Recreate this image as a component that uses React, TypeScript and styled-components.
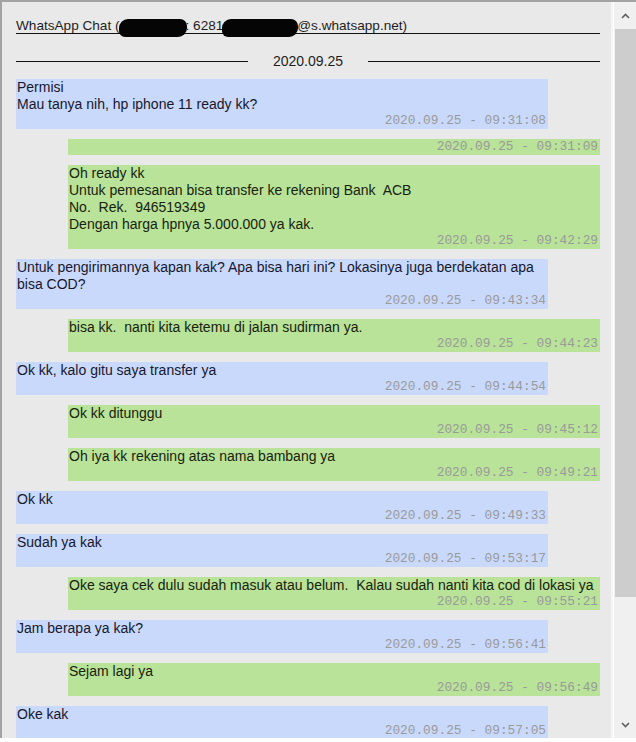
import styled, { createGlobalStyle } from "styled-components";

const GlobalStyle = createGlobalStyle`
  html, body {
    margin: 0;
    padding: 0;
    background: #ffffff;
  }
`

const Window = styled.div`
  display: flex;
  width: 634px;
  height: 736px;
  border-top: 2px solid #a3a3a3;
  border-left: 2px solid #a3a3a3;
  background: #e9e9e9;
  overflow: hidden;
`

const ChatPane = styled.div`
  flex: 1;
  display: flex;
  flex-direction: column;
  padding: 15px 11px 0 14px;
  border-right: 2px solid #f6f6f6;
  overflow: hidden;
  font-family: "Liberation Sans", Arial, sans-serif;
  font-size: 14px;
`

const Header = styled.div`
  height: 16px;
  line-height: 17px;
  font-size: 13.6px;
  color: #1e1e1e;
  border-bottom: 1px solid #111;
  white-space: nowrap;
`

const Redacted = styled.span<{ $w: number }>`
  display: inline-block;
  width: ${(p) => p.$w}px;
  height: 18px;
  margin: -4px -1px;
  border-radius: 9px 7px 9px 6px;
  background: #050505;
  vertical-align: -3px;
`

const DateRow = styled.div`
  display: flex;
  align-items: center;
  gap: 25px;
  margin: 19px 0 9px;
  line-height: 17px;
  font-size: 14px;
  color: #1e1e1e;
`

const DateLine = styled.div`
  flex: 1;
  border-top: 1px solid #111;
`

const MessageList = styled.div`
  display: flex;
  flex-direction: column;
  gap: 10px;
`

const Bubble = styled.div<{ $out: boolean }>`
  align-self: ${(p) => (p.$out ? "flex-end" : "flex-start")};
  width: 532px;
  padding: 0 2px 0 1px;
  box-sizing: border-box;
  background: ${(p) => (p.$out ? "#b8e398" : "#c9d9fb")};
  color: ${(p) => (p.$out ? "#18220f" : "#17172e")};
`

const Line = styled.div`
  line-height: 17px;
  white-space: pre;
`

const Stamp = styled.div`
  font-family: "Liberation Mono", "Courier New", monospace;
  font-size: 12.8px;
  line-height: 16px;
  color: #9a9a9a;
  text-align: right;
  white-space: pre;
`

const ScrollBar = styled.div`
  width: 22px;
  display: flex;
  flex-direction: column;
  background: #f0f0f0;
  border-left: 1px solid #ffffff;
`

const Arrow = styled.div`
  height: 27px;
  display: flex;
  align-items: center;
  justify-content: center;
`

const Thumb = styled.div`
  height: 568px;
  margin-left: 1px;
  background: #cdcdcd;
`

const Track = styled.div`
  flex: 1;
`

type Msg = { out: boolean; lines: string[]; time: string }

const messages: Msg[] = [
  { out: false, lines: ["Permisi", "Mau tanya nih, hp iphone 11 ready kk?"], time: "09:31:08" },
  { out: true, lines: [], time: "09:31:09" },
  {
    out: true,
    lines: [
      "Oh ready kk",
      "Untuk pemesanan bisa transfer ke rekening Bank  ACB",
      "No.  Rek.  946519349",
      "Dengan harga hpnya 5.000.000 ya kak.",
    ],
    time: "09:42:29",
  },
  {
    out: false,
    lines: ["Untuk pengirimannya kapan kak? Apa bisa hari ini? Lokasinya juga berdekatan apa", "bisa COD?"],
    time: "09:43:34",
  },
  { out: true, lines: ["bisa kk.  nanti kita ketemu di jalan sudirman ya."], time: "09:44:23" },
  { out: false, lines: ["Ok kk, kalo gitu saya transfer ya"], time: "09:44:54" },
  { out: true, lines: ["Ok kk ditunggu"], time: "09:45:12" },
  { out: true, lines: ["Oh iya kk rekening atas nama bambang ya"], time: "09:49:21" },
  { out: false, lines: ["Ok kk"], time: "09:49:33" },
  { out: false, lines: ["Sudah ya kak"], time: "09:53:17" },
  {
    out: true,
    lines: ["Oke saya cek dulu sudah masuk atau belum.  Kalau sudah nanti kita cod di lokasi ya"],
    time: "09:55:21",
  },
  { out: false, lines: ["Jam berapa ya kak?"], time: "09:56:41" },
  { out: true, lines: ["Sejam lagi ya"], time: "09:56:49" },
  { out: false, lines: ["Oke kak"], time: "09:57:05" },
]

const Chevron = ({ up }: { up: boolean }) => (
  <svg width="9" height="6" viewBox="0 0 9 6">
    <polyline
      points={up ? "1,5 4.5,1.5 8,5" : "1,1 4.5,4.5 8,1"}
      fill="none"
      stroke="#606060"
      strokeWidth="1.6"
    />
  </svg>
)

const App = (): JSX.Element => {
  return (
    <>
      <GlobalStyle />
      <Window>
        <ChatPane>
          <Header>
            WhatsApp Chat (<Redacted $w={68} />: 6281<Redacted $w={76} />@s.whatsapp.net)
          </Header>
          <DateRow>
            <DateLine />
            <span>2020.09.25</span>
            <DateLine />
          </DateRow>
          <MessageList>
            {messages.map((m, i) => (
              <Bubble key={i} $out={m.out}>
                {m.lines.map((l, j) => (
                  <Line key={j}>{l}</Line>
                ))}
                <Stamp>2020.09.25 - {m.time}</Stamp>
              </Bubble>
            ))}
          </MessageList>
        </ChatPane>
        <ScrollBar>
          <Arrow>
            <Chevron up />
          </Arrow>
          <Thumb />
          <Track />
          <Arrow>
            <Chevron up={false} />
          </Arrow>
        </ScrollBar>
      </Window>
    </>
  )
}

export default App;
